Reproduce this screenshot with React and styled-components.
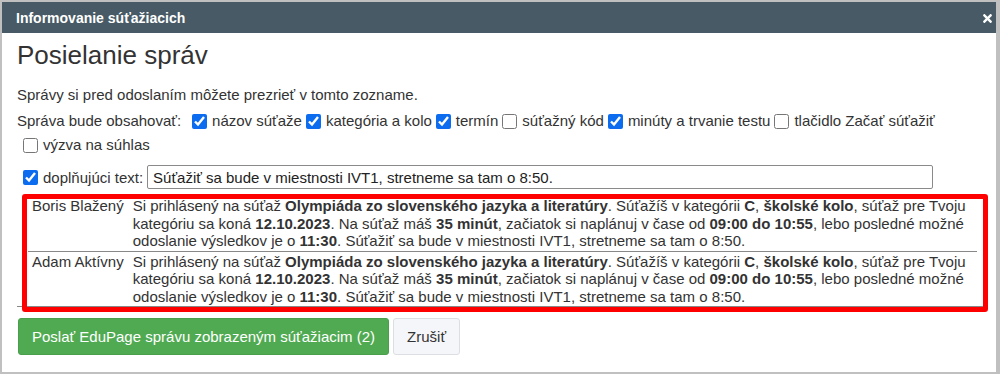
import React, { useState } from "react";
import styled, { createGlobalStyle } from "styled-components";
import { FaTimes } from "react-icons/fa";

const GlobalStyle = createGlobalStyle`
  html, body {
    margin: 0;
    padding: 0;
    background: #c0c0c0;
    font-family: "Liberation Sans", Arial, sans-serif;
    color: #333;
  }
`;

const OPTIONS = [
  { key: "nazov", label: "názov súťaže", checked: true },
  { key: "kategoria", label: "kategória a kolo", checked: true },
  { key: "termin", label: "termín", checked: true },
  { key: "kod", label: "súťažný kód", checked: false },
  { key: "minuty", label: "minúty a trvanie testu", checked: true },
  { key: "tlacidlo", label: "tlačidlo Začať súťažiť", checked: false },
  { key: "vyzva", label: "výzva na súhlas", checked: false },
];

const STUDENTS = ["Boris Blažený", "Adam Aktívny"];

const Message = ({ extra }) => (
  <>
    Si prihlásený na súťaž <b>Olympiáda zo slovenského jazyka a literatúry</b>.
    Súťažíš v kategórii <b>C</b>, <b>školské kolo</b>, súťaž pre Tvoju kategóriu
    sa koná <b>12.10.2023</b>. Na súťaž máš <b>35 minút</b>, začiatok si
    naplánuj v čase od <b>09:00 do 10:55</b>, lebo posledné možné odoslanie
    výsledkov je o <b>11:30</b>. {extra}
  </>
);

const App = () => {
  const [opts, setOpts] = useState(OPTIONS);
  const [extraOn, setExtraOn] = useState(true);
  const [extra, setExtra] = useState(
    "Súťažiť sa bude v miestnosti IVT1, stretneme sa tam o 8:50."
  );

  const toggle = (key) =>
    setOpts((o) => o.map((x) => (x.key === key ? { ...x, checked: !x.checked } : x)));

  return (
    <>
      <GlobalStyle />
      <Dialog>
        <Header>
          <HeaderTitle>Informovanie súťažiacich</HeaderTitle>
          <Close>
            <FaTimes size={13} />
          </Close>
        </Header>
        <Body>
          <Title>Posielanie správ</Title>
          <Text>Správy si pred odoslaním môžete prezrieť v tomto zozname.</Text>
          <Options>
            <Lead>Správa bude obsahovať:</Lead>
            {opts.map((o) => (
              <Option key={o.key}>
                <Check checked={o.checked} onChange={() => toggle(o.key)} />
                {o.label}
              </Option>
            ))}
          </Options>
          <ExtraRow>
            <Option>
              <Check checked={extraOn} onChange={() => setExtraOn(!extraOn)} />
              doplňujúci text:
            </Option>
            <TextInput value={extra} onChange={(e) => setExtra(e.target.value)} />
          </ExtraRow>
          <List>
            <Table>
              <tbody>
                {STUDENTS.map((name) => (
                  <Row key={name}>
                    <NameCell>{name}</NameCell>
                    <MsgCell>
                      <Message extra={extraOn ? extra : ""} />
                    </MsgCell>
                  </Row>
                ))}
              </tbody>
            </Table>
            <Highlight />
          </List>
          <Buttons>
            <Button $primary>Poslať EduPage správu zobrazeným súťažiacim (2)</Button>
            <Button>Zrušiť</Button>
          </Buttons>
        </Body>
      </Dialog>
    </>
  );
};

const Dialog = styled.div`
  margin: 2px 4px 2px 2px;
  height: 370px;
  background: #fff;
  display: flex;
  flex-direction: column;
`;

const Header = styled.div`
  height: 31px;
  background: #475a66;
  display: flex;
  align-items: center;
  justify-content: space-between;
  padding: 0 2px 0 14px;
`;

const HeaderTitle = styled.div`
  color: #fff;
  font-size: 14px;
  font-weight: bold;
  line-height: 31px;
  padding-top: 1px;
`;

const Close = styled.div`
  color: #fff;
  display: flex;
  align-items: center;
  padding-top: 1px;
`;

const Body = styled.div`
  padding: 0 8px 16px 15px;
  display: flex;
  flex-direction: column;
  align-items: flex-start;
  font-size: 15px;
`;

const Title = styled.h2`
  margin: 7px 0 0;
  font-size: 26px;
  line-height: 30px;
  font-weight: normal;
  color: #333;
`;

const Text = styled.p`
  margin: 15px 0 0;
  font-size: 15px;
  line-height: 20px;
`;

const Options = styled.div`
  margin-top: 4px;
  padding-left: 6px;
  display: flex;
  flex-wrap: wrap;
  font-size: 15px;
  line-height: 24px;
  width: 960px;
  box-sizing: border-box;
`;

const Lead = styled.span`
  margin: 0 11px 0 -6px;
`;

const Option = styled.label`
  display: inline-flex;
  align-items: center;
  margin-right: 4px;
  font-size: 15px;
  white-space: nowrap;
`;

const Check = styled.input.attrs({ type: "checkbox" })`
  width: 15px;
  height: 15px;
  margin: 0 5px 0 0;
  accent-color: #0b6cf0;
`;

const ExtraRow = styled.div`
  margin-top: 8px;
  padding-left: 6px;
  display: flex;
  align-items: center;
  height: 24px;
`;

const TextInput = styled.input.attrs({ type: "text" })`
  width: 786px;
  height: 24px;
  box-sizing: border-box;
  margin-left: 0;
  border: 1px solid #8a8a8a;
  border-radius: 2px;
  padding: 0 5px;
  font-family: "Liberation Sans", Arial, sans-serif;
  font-size: 15px;
  color: #222;
  outline: none;
`;

const List = styled.div`
  position: relative;
  margin-top: 7px;
  width: 971px;
  box-sizing: border-box;
  padding: 0 11px;
  border-bottom: 1px solid #888;
`;

const Table = styled.table`
  width: 100%;
  border-collapse: collapse;
  font-size: 15px;
  line-height: 17.5px;
`;

const Row = styled.tr`
  & + & td {
    border-top: 1px solid #888;
  }
`;

const NameCell = styled.td`
  padding: 1px 4px;
  vertical-align: top;
  white-space: nowrap;
  width: 1%;
`;

const MsgCell = styled.td`
  padding: 1px 4px 1px 5px;
  vertical-align: top;
`;

const Highlight = styled.div`
  position: absolute;
  left: 5px;
  right: 0;
  top: -2px;
  bottom: -6px;
  border: 5px solid #ff0000;
  border-radius: 3px;
  pointer-events: none;
`;

const Buttons = styled.div`
  margin-top: 11px;
  display: flex;
  gap: 4px;
  padding-left: 1px;
`;

const Button = styled.button`
  height: 37px;
  padding: 0 13px;
  font-family: "Liberation Sans", Arial, sans-serif;
  font-size: 15px;
  border-radius: 3px;
  cursor: pointer;
  background: ${(p) => (p.$primary ? "#50aa52" : "#f5f6f9")};
  color: ${(p) => (p.$primary ? "#fff" : "#333")};
  border: 1px solid ${(p) => (p.$primary ? "#4a9f4c" : "#dcdee3")};
`;

export default App;
